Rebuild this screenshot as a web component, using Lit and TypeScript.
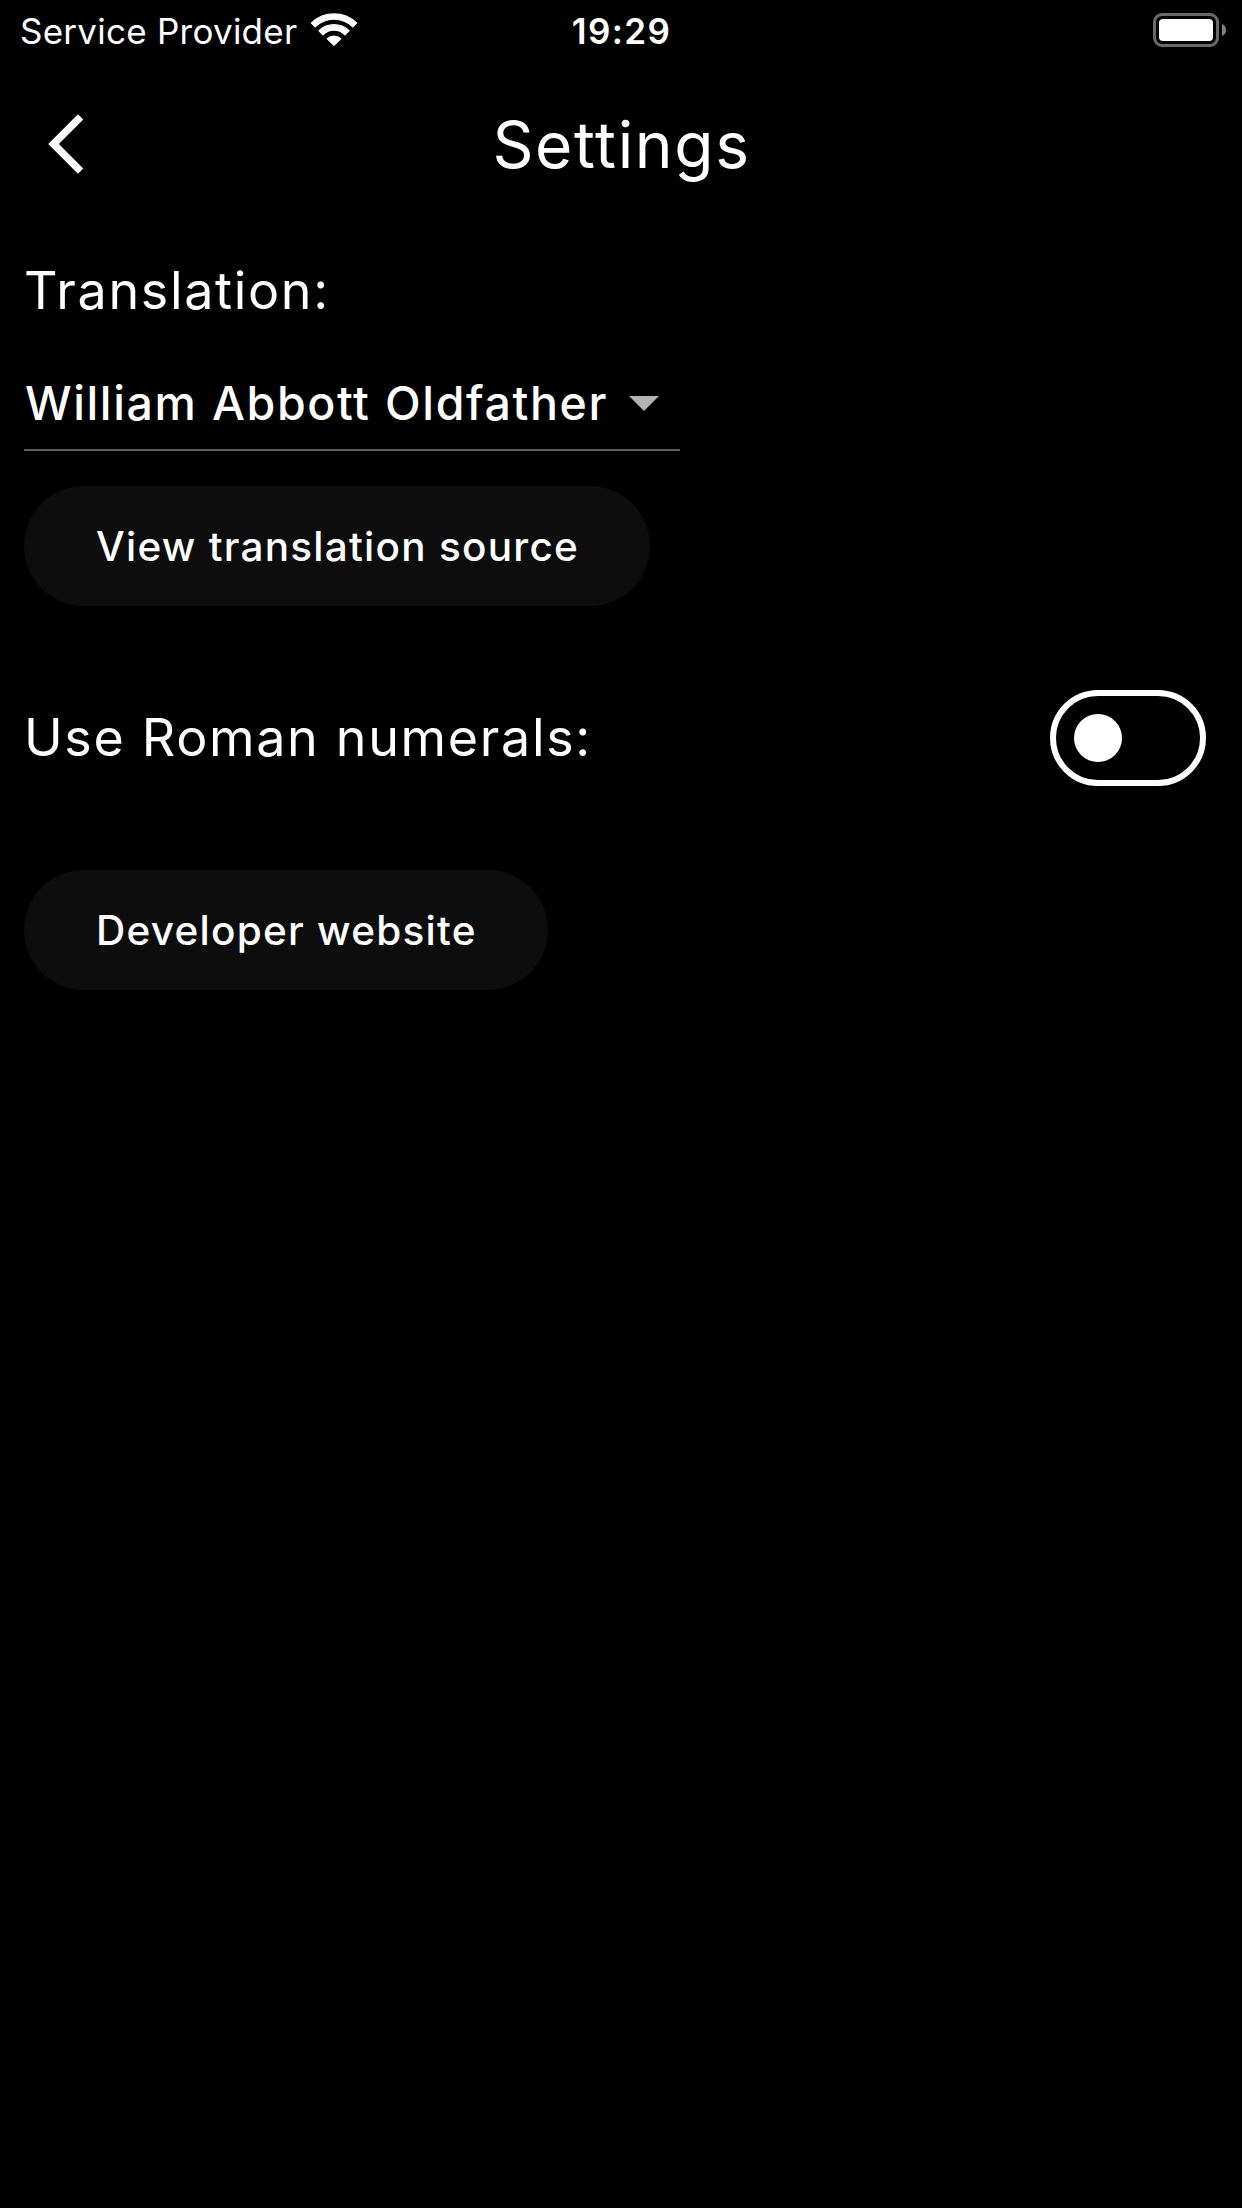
import { LitElement, html, css } from "lit";
import { customElement, property, state } from "lit/decorators.js";

@customElement("status-bar")
export class StatusBar extends LitElement {
  static styles = css`
    :host {
      display: grid;
      grid-template-columns: 1fr auto 1fr;
      align-items: start;
      height: 84px;
      font-size: 35px;
      line-height: 63px;
      color: #fff;
    }
    .carrier {
      display: flex;
      padding-left: 20px;
      letter-spacing: 0.25px;
      white-space: nowrap;
    }
    .wifi {
      display: block;
      width: 48px;
      height: 36px;
      margin: 12px 0 0 12.6px;
    }
    .time {
      padding-left: 1px;
      font-weight: 600;
      letter-spacing: 1.4px;
    }
    .power {
      display: flex;
      justify-content: flex-end;
      padding-right: 14px;
    }
    .battery {
      display: block;
      width: 76px;
      height: 36px;
      margin-top: 12px;
    }
  `;
  render() {
    return html`
      <div class="carrier">
        <span>Service Provider</span>
        <svg class="wifi" viewBox="0 0 48 36" fill="#fff" stroke="#fff" stroke-linejoin="round">
          <path stroke-width="1.4" d="M1.5 11.05A32.2 32.2 0 0 1 46.5 11.05L42.85 14.7A26.8 26.8 0 0 0 5.15 14.7Z" />
          <path stroke-width="1.4" d="M9.1 18.75A21.2 21.2 0 0 1 38.9 18.75L35 22.65A15.6 15.6 0 0 0 13 22.65Z" />
          <path stroke-width="1.4" d="M17.4 26.85A9.8 9.8 0 0 1 30.6 26.85L24 33.3Z" />
        </svg>
      </div>
      <span class="time">19:29</span>
      <div class="power">
        <svg class="battery" viewBox="0 0 76 36">
          <rect x="2.5" y="2.5" width="63" height="31" rx="7.5" fill="none" stroke="#6a6a6a" stroke-width="3" />
          <rect x="7" y="7" width="54" height="22" rx="4" fill="#fff" />
          <path d="M70 12Q74 13.6 74 18T70 24Z" fill="#808080" />
        </svg>
      </div>
    `;
  }
}

@customElement("pill-button")
export class PillButton extends LitElement {
  static styles = css`
    :host {
      display: flex;
    }
    .pill {
      box-sizing: border-box;
      height: 120px;
      padding: 1px 71px 0 72px;
      border: 0;
      border-radius: 60px;
      background: #0d0d0d;
      color: #fff;
      font: 500 40.5px/119px Inter, sans-serif;
      letter-spacing: 1.25px;
      white-space: nowrap;
    }
  `;
  @property() label = "";
  render() {
    return html`<button class="pill">${this.label}</button>`;
  }
}

@customElement("toggle-switch")
export class ToggleSwitch extends LitElement {
  static styles = css`
    .track {
      display: flex;
      align-items: center;
      box-sizing: border-box;
      width: 156px;
      height: 96px;
      padding: 0 18px;
      border: 6px solid #fff;
      border-radius: 48px;
      background: #000;
    }
    .track.on {
      justify-content: flex-end;
    }
    .knob {
      width: 48px;
      height: 48px;
      border-radius: 50%;
      background: #fff;
    }
  `;
  @property({ type: Boolean }) on = false;
  render() {
    return html`
      <div
        class="track ${this.on ? "on" : ""}"
        role="switch"
        aria-checked=${this.on ? "true" : "false"}
        @click=${() => this.dispatchEvent(new CustomEvent("toggle"))}
      >
        <div class="knob"></div>
      </div>
    `;
  }
}

@customElement("app-root")
export class AppRoot extends LitElement {
  @state() roman = false;
  static styles = css`
    :host {
      display: block;
      min-height: 2208px;
      background: #000;
      color: #fff;
      font-family: Inter, "Noto Sans", sans-serif;
    }
    .header {
      display: grid;
      grid-template-columns: 1fr auto 1fr;
      height: 120px;
    }
    .back {
      display: block;
      width: 36px;
      height: 60px;
      margin: 30px 0 0 48px;
    }
    .title {
      margin: 0;
      padding-left: 1px;
      font-size: 64px;
      font-weight: 400;
      line-height: 121px;
      letter-spacing: 1.65px;
    }
    .content {
      display: flex;
      flex-direction: column;
      padding: 45px 36px 0 24px;
    }
    .label {
      font-size: 52px;
      line-height: 84px;
      letter-spacing: 1.67px;
      white-space: nowrap;
    }
    .select {
      display: flex;
      align-items: center;
      box-sizing: border-box;
      width: 656px;
      height: 96px;
      margin: 22px 0 35px;
      padding: 2px 21px 0 1px;
      border-bottom: 2px solid #5e5e5e;
      justify-content: space-between;
      font-size: 46.5px;
      font-weight: 500;
      line-height: 92px;
      letter-spacing: 1.6px;
      word-spacing: 0.6px;
      white-space: nowrap;
    }
    .caret {
      display: block;
      width: 30px;
      height: 15px;
      margin-top: 1px;
    }
    .row {
      display: flex;
      align-items: center;
      justify-content: space-between;
      height: 96px;
      margin: 84px 0;
    }
  `;
  render() {
    return html`
      <status-bar></status-bar>
      <div class="header">
        <svg class="back" viewBox="0 0 36 60" fill="none" stroke="#fff" stroke-width="7.5">
          <path d="M32.6 2.9L5.5 30L32.6 57.1" />
        </svg>
        <h1 class="title">Settings</h1>
      </div>
      <div class="content">
        <div class="label">Translation:</div>
        <div class="select">
          <span>William Abbott Oldfather</span>
          <svg class="caret" viewBox="0 0 30 15"><path d="M0 0H30L15 15Z" fill="#b3b3b3" /></svg>
        </div>
        <pill-button .label=${"View translation source"}></pill-button>
        <div class="row">
          <div class="label">Use Roman numerals:</div>
          <toggle-switch .on=${this.roman} @toggle=${() => (this.roman = !this.roman)}></toggle-switch>
        </div>
        <pill-button .label=${"Developer website"}></pill-button>
      </div>
    `;
  }
}
